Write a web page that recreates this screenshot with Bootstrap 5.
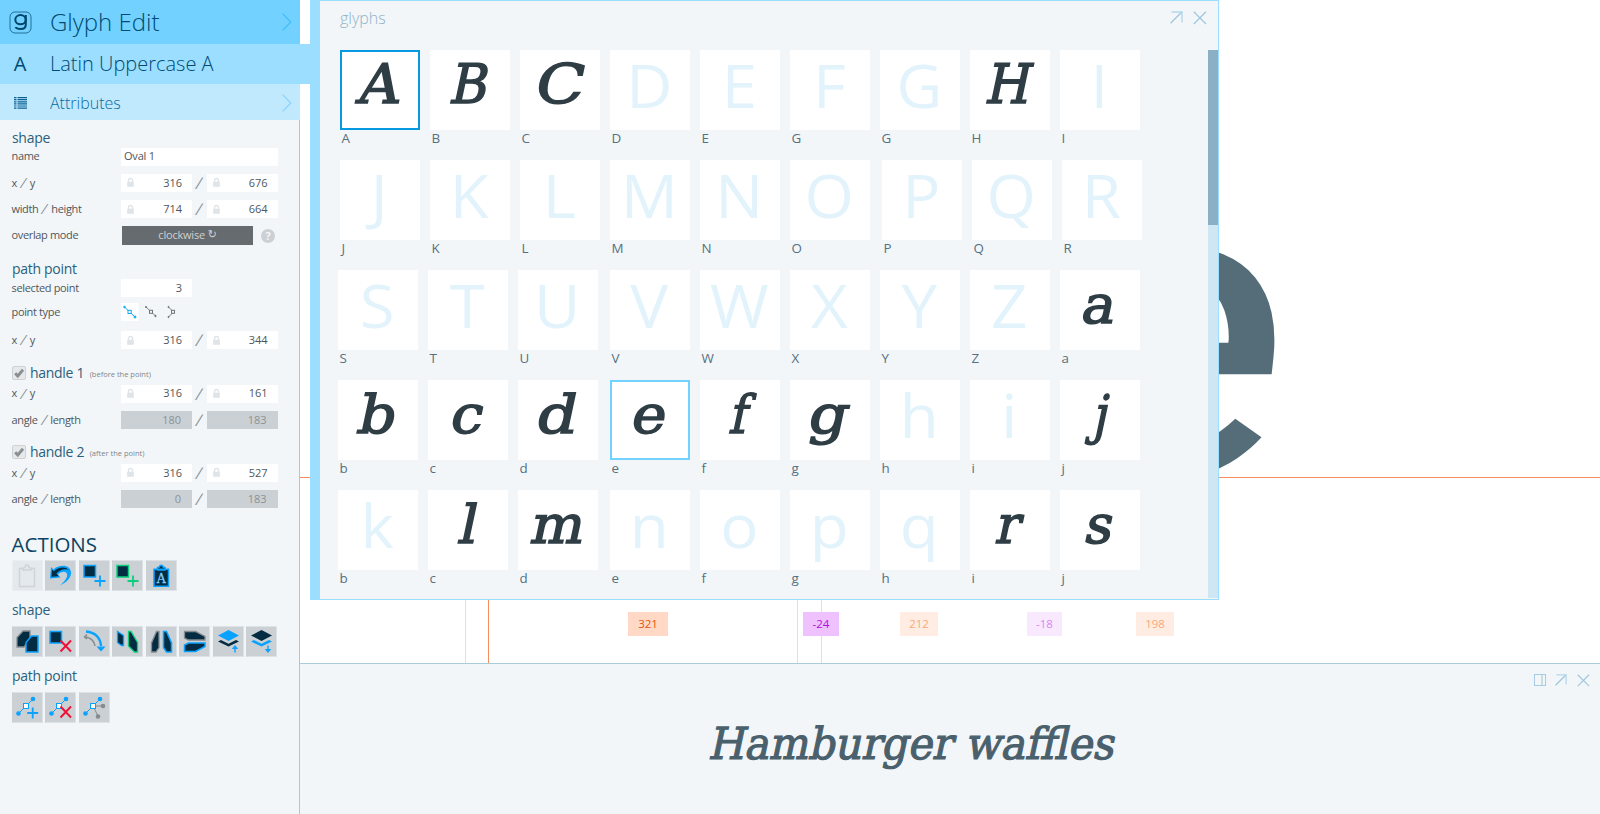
<!DOCTYPE html>
<html lang="en">
<head>
<meta charset="utf-8">
<title>Glyph Edit</title>
<link href="https://cdn.jsdelivr.net/npm/bootstrap@5.3.0/dist/css/bootstrap.min.css" rel="stylesheet">
<style>
body{font-family:"Open Sans","Noto Sans",sans-serif;width:1600px;height:814px;overflow:hidden;background:#fff}
svg{display:block;overflow:visible}
.side{width:300px;height:814px;flex:none}
.side-body{height:694px;background:#f2f6f9;border-right:1px solid #abc7d8;padding:10.5px 0 0 12px}
.crumb{font-weight:300;color:#004b73;line-height:1;white-space:nowrap;flex:none}
.crumb .ico{width:40px;flex:none}
.crumb .ttl{padding-left:10px}
.c1{height:44px;background:#72d1ff;font-size:24px}
.c2{height:40px;background:#9bdeff;font-size:20px;width:310px;position:relative;z-index:2;padding-bottom:1px}
.c3{height:36px;background:#c0e9fe;font-size:16px;color:#0a6c9e;padding-top:2px}
.grp{height:13px;line-height:13px;font-size:14px;color:#2b5f7c;letter-spacing:-.3px}
.grp small{font-size:7.5px;color:#7d868c;padding-top:4px;letter-spacing:0;margin-left:5.5px}
.prow{height:26.3px;font-size:11px;color:#4f565b}
.prow>.lab{width:109px;flex:none;letter-spacing:-.35px;margin-left:-.5px;margin-right:.5px}
.sl{color:#8b9297;font-size:14px;line-height:16px;transform:skewX(-16deg);margin:0 4px}
.gap-sl{width:14.5px;text-align:center;font-size:16px;color:#8b9297;transform:skewX(-14deg)}
.fld{width:71px;height:18px;background:#fff;padding:0 10px 0 6px;font-size:11px}
.fld.name-in{width:157px;padding-left:3px;letter-spacing:-.2px}
.fld.off{background:#cbd0d4;color:#8b9297;padding-right:11px}
.mode{width:131px;height:19px;background:#666b6f;color:#ccd1d5;font-size:11px;margin-left:1px;letter-spacing:-.2px}
.help{width:14px;height:14px;background:#cdd0d3;color:#f2f6f9;font-size:11px;line-height:14px;font-weight:700;margin-left:8px}
.chk{width:14px;height:14px;background:#e6e8ea;border:1px solid #cfd2d4;border-radius:2px;margin-right:4px}
.big-h{font-size:20.5px;line-height:20px;color:#0c4363;margin:21.5px 0 6.5px -.5px}
.acts{gap:2.5px;margin-left:-.4px}
.act{width:31px;height:31px;background:#cbd0d4;border:1px solid #dde2e6;border-left-color:#cbd0d4}
.act svg{margin:-1px}
.act.dis{background:#e4e9ed;border-color:#eaeef2}
.board{width:1300px;height:814px;position:relative}
.guide{position:absolute}
.kern{position:absolute;top:612px;height:24px;font-size:11.5px;line-height:24px;text-align:center}
.bigletter{position:absolute;font-family:Roboto,sans-serif;font-weight:400;color:#556d79;line-height:1;transform-origin:0 100%}
.win{position:absolute;left:10px;top:0;width:909px;height:600px;background:#f2f6f9;border:1px solid #9bdeff;border-left-width:10px}
.win-title{position:absolute;left:20px;top:6px;font-weight:300;font-size:16px;line-height:22px;color:#8fb4c8}
.win-tools{position:absolute;right:11px;top:10px;gap:10px}
.tiles{position:absolute;left:18px;top:49px}
.trow{height:110px;gap:10px}
.trow.first{padding-left:2px}
.tile{width:80px;height:80px;background:#fff}
.tile.sel{box-shadow:inset 0 0 0 2px #0499e0}
.tile.hov{box-shadow:inset 0 0 0 2px #72d1ff}
.nudge{margin-left:2px}
.tcap{font-size:12.5px;line-height:14px;color:#567080;padding-left:1.4px;margin-top:2px;transform:scaleX(1.07);transform-origin:0 0}
.ghost{font:60px "Open Sans",sans-serif;fill:#e2f3fc;text-anchor:middle}
.slab{font-family:"DejaVu Serif",serif}
.scroll-track{position:absolute;right:0;top:49px;width:10px;height:548px;background:#cee7f3}
.scroll-thumb{height:175px;background:#8bb0c5}
.preview{position:absolute;left:0;top:663px;width:1300px;height:151px;background:#f2f6f9;border-top:1px solid #a9cbdc}
</style>
</head>
<body class="d-flex">

<svg width="0" height="0" class="position-absolute">
  <symbol id="lock" viewBox="0 0 8 11"><path d="M1.7 5V3.2a2.3 2.3 0 0 1 4.6 0V5" fill="none" stroke="#dfe4e9" stroke-width="1.5"/><rect x=".2" y="4.6" width="7.600" height="5.800" fill="#dfe4e9"/></symbol>
  <symbol id="tick" viewBox="0 0 12 12"><path d="M2.2 6.2 4.8 9 10 2.8" fill="none" stroke="#8c8f92" stroke-width="2.9"/></symbol>
  <symbol id="chev" viewBox="0 0 10 18"><path d="M.6.7 8.800 9 .6 17.300" fill="none" stroke="currentColor" stroke-width="1.1"/></symbol>
  <symbol id="xmark" viewBox="0 0 14 14"><path d="M.8.8 13 13M13 .8.8 13" fill="none" stroke="#a0c9de" stroke-width="1.3"/></symbol>
  <symbol id="outarrow" viewBox="0 0 13 13"><path d="M.6 12.200 12 .8" fill="none" stroke="#9dc8de" stroke-width="1.3"/><path d="M1.500 1H12v10.500" fill="none" stroke="#b5d7e8" stroke-width="1.4"/></symbol>
</svg>

<aside class="side">
  <div class="crumb c1 d-flex align-items-center">
    <span class="ico d-flex justify-content-center"><svg width="23" height="23" viewBox="0 0 23 23" fill="none" stroke="#00466b"><rect x="1" y="1" width="21" height="21" rx="5" stroke-width=".7"/><ellipse cx="11.500" cy="8.700" rx="5.200" ry="4.600" stroke-width="2"/><path d="M16.800 4v9.500c0 3.200-2 4.500-5.300 4.500-2.700 0-4.300-.6-5-1.900" stroke-width="2"/></svg></span>
    <span class="ttl flex-grow-1">Glyph Edit</span>
    <svg width="10" height="18" class="me-2" color="#3bbaf8"><use href="#chev"/></svg>
  </div>
  <div class="crumb c2 d-flex align-items-center">
    <span class="ico text-center fw-normal">A</span>
    <span class="ttl">Latin Uppercase A</span>
  </div>
  <div class="crumb c3 d-flex align-items-center">
    <span class="ico d-flex justify-content-center"><svg width="13" height="12" viewBox="0 0 13 12" stroke="#0a6294"><path d="M0 .6h2.500M0 2.700h2.500M0 4.800h2.500M0 6.900h2.500M0 9h2.500M0 11.100h2.500M3.500.6H13M3.500 2.700H13M3.500 4.800H13M3.500 6.900H13M3.500 9H13M3.500 11.100H13" stroke-width="1.200"/></svg></span>
    <span class="ttl flex-grow-1">Attributes</span>
    <svg width="10" height="18" class="me-2" color="#86d2fb"><use href="#chev"/></svg>
  </div>

  <div class="side-body">
    <div class="grp">shape</div>
    <div class="prow d-flex align-items-center"><span class="lab">name</span><span class="fld name-in d-flex align-items-center">Oval 1</span></div>
    <div class="prow d-flex align-items-center" data-pair="x,y,316,676"></div>
    <div class="prow d-flex align-items-center" data-pair="width,height,714,664"></div>
    <div class="prow d-flex align-items-center"><span class="lab">overlap mode</span><span class="mode d-flex align-items-center justify-content-center">clockwise&nbsp;<span style="font-family:'DejaVu Sans'">↻</span></span><span class="help rounded-circle text-center">?</span></div>

    <div class="grp" style="margin-top:13px">path point</div>
    <div class="prow d-flex align-items-center"><span class="lab">selected point</span><span class="fld d-flex align-items-center justify-content-end">3</span></div>
    <div class="prow d-flex align-items-center" style="margin-top:-2px;margin-bottom:2px"><span class="lab">point type</span>
      <svg width="60" height="18" viewBox="0 0 60 18" fill="none">
        <rect width="17.500" height="18" fill="#fff"/>
        <g stroke="#14a5f5" fill="#14a5f5"><path d="M3.500 4 14 14"/><rect x="7" y="7.300" width="3.200" height="3.200" fill="#fff"/><circle cx="3.500" cy="4" r=".8"/><circle cx="14" cy="14" r="1"/></g>
        <g stroke="#6f7578" fill="#6f7578"><path d="M25 4 34.500 13" stroke-width=".9"/><rect x="28.500" y="7.300" width="3" height="3" fill="#f2f6f9"/><circle cx="25" cy="4" r=".6"/><circle cx="34.500" cy="13" r=".7"/></g>
        <g stroke="#6f7578" fill="#6f7578"><path d="M47.500 4 52.500 9 47.500 14" fill="none" stroke-width=".9"/><rect x="50.500" y="7.300" width="3" height="3" fill="#f2f6f9"/><circle cx="47.500" cy="4" r=".6"/><circle cx="47.500" cy="14" r=".6"/></g>
      </svg>
    </div>
    <div class="prow d-flex align-items-center" data-pair="x,y,316,344"></div>

    <div class="grp d-flex align-items-center" style="margin:12.500px 0 1.300px"><span class="chk"><svg width="12" height="12"><use href="#tick"/></svg></span>handle 1<small>(before the point)</small></div>
    <div class="prow d-flex align-items-center" data-pair="x,y,316,161"></div>
    <div class="prow d-flex align-items-center" data-pair="angle,length,180,183,off"></div>

    <div class="grp d-flex align-items-center" style="margin:12.500px 0 1.300px"><span class="chk"><svg width="12" height="12"><use href="#tick"/></svg></span>handle 2<small>(after the point)</small></div>
    <div class="prow d-flex align-items-center" data-pair="x,y,316,527"></div>
    <div class="prow d-flex align-items-center" data-pair="angle,length,0,183,off"></div>

    <div class="big-h">ACTIONS</div>
    <div class="acts d-flex">
      <span class="act dis"><svg width="31" height="31" viewBox="0 0 31 31" fill="none" stroke="#cfd4d8" stroke-width="1.500"><path d="M11 8.500H7.500v18h15v-18H19M11 10V8l2-.5c0-3.300 4-3.300 4 0l2 .5v2z"/></svg></span>
      <span class="act"><svg width="31" height="31" viewBox="0 0 31 31"><path d="M5 18.500 6 7l2.500 2.500c5-5 16.500-5.500 17.500 2.500.6 6-5 10.500-11 13.500 4.500-4 8-8 7-11.500-1-3.500-6-2.500-9 .5l2.500 3z" fill="#0aa2ff"/><path d="M6.500 16.800 7 9.500l1.900 1.700c4-4.500 13-5.500 15-.4-3-3-9-1-12.500 2.700l2.400 2.700z" fill="#032c42"/></svg></span>
      <span class="act"><svg width="31" height="31" viewBox="0 0 31 31"><rect x="5" y="5.500" width="11.500" height="11.500" fill="#032c42" stroke="#0aa2ff" stroke-width="1.500"/><path d="M21 15.500v11M15.500 21h11" stroke="#0aa2ff" stroke-width="1.800"/></svg></span>
      <span class="act"><svg width="31" height="31" viewBox="0 0 31 31"><rect x="5" y="5.500" width="11.500" height="11.500" fill="#032c42" stroke="#09cf7c" stroke-width="1.500"/><path d="M21 15.500v11M15.500 21h11" stroke="#09cf7c" stroke-width="1.800"/></svg></span>
      <span class="act"><svg width="31" height="31" viewBox="0 0 31 31"><path d="M8 9.300h14.500v17H8zM11.500 10V7.500l2-.5c0-2.500 3.500-2.500 3.500 0l2 .5V10z" fill="#032c42" stroke="#0aa2ff" stroke-width="1.500"/><text x="15.300" y="23" font-family="DejaVu Serif" font-size="12.500" text-anchor="middle" fill="#7ccfff" stroke="#7ccfff" stroke-width=".3">A</text></svg></span>
    </div>

    <div class="grp" style="margin:12px 0 10px">shape</div>
    <div class="acts d-flex">
      <span class="act"><svg width="31" height="31" viewBox="0 0 31 31"><path d="M5 21V11.500L11 5h7v8l-6 8z" fill="#032c42" stroke="#858b8f" stroke-width="1.300"/><path d="M14 26V16.500L19.500 10H26v16z" fill="#032c42" stroke="#0aa2ff" stroke-width="1.500"/></svg></span>
      <span class="act"><svg width="31" height="31" viewBox="0 0 31 31"><rect x="5" y="5.500" width="11.500" height="11.500" fill="#032c42" stroke="#0aa2ff" stroke-width="1.500"/><path d="m15.500 14.500 10.500 11M26 14.500l-10.500 11" stroke="#ee1037" stroke-width="1.900"/></svg></span>
      <span class="act"><svg width="31" height="31" viewBox="0 0 31 31" fill="none"><path d="M7 5.500C16 6 21.500 12 22 20" stroke="#0aa2ff" stroke-width="2.300"/><path d="M17.500 20.500h9L22 25.500z" fill="#0aa2ff"/><path d="M6 11c5 0 9.500 4 10 9M8 8.500 5.500 11 8 13" stroke="#858b8f" stroke-width="1.500"/></svg></span>
      <span class="act"><svg width="31" height="31" viewBox="0 0 31 31"><path d="M5.500 5.500v11l4 3h2v-10z" fill="#032c42" stroke="#0aa2ff" stroke-width="1.300"/><path d="M16.500 5.500H19l6.500 11V26h-3l-6-6z" fill="#032c42" stroke="#09cf7c" stroke-width="1.300"/></svg></span>
      <span class="act"><svg width="31" height="31" viewBox="0 0 31 31"><path d="M13 5.500v16L10 26H5.500v-9l5-11.500z" fill="#032c42" stroke="#858b8f" stroke-width="1.300"/><path d="M17.500 5.500v16l3 4.500H25.500v-9l-5-11.500z" fill="#032c42" stroke="#0aa2ff" stroke-width="1.500"/></svg></span>
      <span class="act"><svg width="31" height="31" viewBox="0 0 31 31"><path d="M5.500 5.500h11l9.500 5V14H9.500l-4-2z" fill="#032c42" stroke="#858b8f" stroke-width="1.300"/><path d="M5.500 25.500h11l9.500-5V17H9.500l-4 2z" fill="#032c42" stroke="#0aa2ff" stroke-width="1.500"/></svg></span>
      <span class="act"><svg width="31" height="31" viewBox="0 0 31 31"><path d="M15.500 4 26 9.500 15.500 15 5 9.500z" fill="#0aa2ff"/><path d="m5 15.500 3-1.500 7.500 3.700L23 14l3 1.500-10.500 5z" fill="#032c42"/><path d="M22 26.500v-5M20.300 22.200 22 20.200l1.700 2z" stroke="#0aa2ff" stroke-width="1.400" fill="#0aa2ff"/></svg></span>
      <span class="act"><svg width="31" height="31" viewBox="0 0 31 31"><path d="M15.500 4 26 9.500 15.500 15 5 9.500z" fill="#032c42"/><path d="m5 15.500 3-1.500 7.500 3.700L23 14l3 1.500-10.500 5z" fill="#0aa2ff"/><path d="M22 19.500v5M20.300 23.800 22 25.800l1.700-2z" stroke="#0aa2ff" stroke-width="1.400" fill="#0aa2ff"/></svg></span>
    </div>

    <div class="grp" style="margin:12px 0 9.500px">path point</div>
    <div class="acts d-flex">
      <span class="act"><svg width="31" height="31" viewBox="0 0 31 31"><path d="M6.500 21.500 21 7" stroke="#0aa2ff"/><circle cx="6.500" cy="21.500" r="2.300" fill="#0aa2ff"/><circle cx="21" cy="7" r="2.300" fill="#0aa2ff"/><rect x="11.500" y="11.500" width="5" height="5" fill="#fff" stroke="#0aa2ff"/><path d="M20.700 15.500v11M15.200 21h11" stroke="#0aa2ff" stroke-width="1.800"/></svg></span>
      <span class="act"><svg width="31" height="31" viewBox="0 0 31 31"><path d="M6.500 21.500 21 7" stroke="#0aa2ff"/><circle cx="6.500" cy="21.500" r="2.300" fill="#0aa2ff"/><circle cx="21" cy="7" r="2.300" fill="#0aa2ff"/><rect x="11.500" y="11.500" width="5" height="5" fill="#fff" stroke="#0aa2ff"/><path d="m15.500 14.500 10.500 11M26 14.500l-10.500 11" stroke="#ee1037" stroke-width="1.900"/></svg></span>
      <span class="act"><svg width="31" height="31" viewBox="0 0 31 31"><path d="M14 14h10M14 14l5 10" stroke="#858b8f"/><circle cx="24" cy="14" r="2.300" fill="#858b8f"/><circle cx="19" cy="24.500" r="2.300" fill="#858b8f"/><path d="M6.500 21.500 21 7" stroke="#0aa2ff"/><circle cx="6.500" cy="21.500" r="2.300" fill="#0aa2ff"/><circle cx="21" cy="7" r="2.300" fill="#0aa2ff"/><rect x="11.500" y="11.500" width="5" height="5" fill="#fff" stroke="#0aa2ff"/></svg></span>
    </div>
  </div>
</aside>

<main class="board">
  <span class="bigletter" style="left:699px;top:115px;font-size:430px;transform:skewX(-6deg) scaleX(1.2)">e</span>
  <i class="guide" style="left:0;top:477px;width:1300px;height:1px;background:#f98c5c"></i>
  <i class="guide" style="left:165px;top:600px;width:1px;height:63px;background:#fcd6c6"></i>
  <i class="guide" style="left:188px;top:600px;width:1px;height:63px;background:#f98c5c"></i>
  <i class="guide" style="left:497px;top:600px;width:1px;height:63px;background:#fcd6c6"></i>
  <i class="guide" style="left:521px;top:600px;width:1px;height:63px;background:#fcd6c6"></i>
  <span class="kern" style="left:328px;width:40px;background:#ffd9c6;color:#e2560f">321</span>
  <span class="kern" style="left:503px;width:36px;background:#efc2ff;color:#b010e0">-24</span>
  <span class="kern" style="left:600px;width:38px;background:#ffece3;color:#fba878">212</span>
  <span class="kern" style="left:727px;width:35px;background:#f9e9ff;color:#dd84f5">-18</span>
  <span class="kern" style="left:836px;width:38px;background:#ffece3;color:#fba878">198</span>

  <section class="preview">
    <div class="d-flex justify-content-end" style="gap:9px;padding:10px 10px 0 0">
      <svg width="12" height="12" viewBox="0 0 12 12"><path d="M8 1v10" stroke="#c3dfed" stroke-width="2"/><rect x=".5" y=".5" width="11" height="11" fill="none" stroke="#a5cce0"/></svg>
      <svg width="12" height="12"><use href="#outarrow"/></svg>
      <svg width="13" height="13" style="margin-left:1px"><use href="#xmark"/></svg>
    </div>
    <svg id="sample" width="1300" height="90" fill="#4a606c" stroke="#4a606c"></svg>
  </section>

  <section class="win">
    <div class="win-title">glyphs</div>
    <div class="win-tools d-flex"><svg width="13" height="13"><use href="#outarrow"/></svg><svg width="14" height="14"><use href="#xmark"/></svg></div>
    <div class="tiles" id="tiles"></div>
    <div class="scroll-track"><div class="scroll-thumb"></div></div>
  </section>
</main>

<script src="https://cdn.jsdelivr.net/npm/bootstrap@5.3.0/dist/js/bootstrap.bundle.min.js"></script>
<script>
// coordinate pairs: first label, second label, two values, optional read-only flag
document.querySelectorAll('[data-pair]').forEach(el => {
  const [a, b, v1, v2, off] = el.dataset.pair.split(',');
  const fld = v => off
    ? `<span class="fld off d-flex align-items-center justify-content-end">${v}</span>`
    : `<span class="fld d-flex align-items-center justify-content-between"><svg width="7" height="11"><use href="#lock"/></svg>${v}</span>`;
  el.innerHTML = `<span class="lab d-flex align-items-center">${a}<span class="sl">/</span>${b}</span>${fld(v1)}<span class="gap-sl">/</span>${fld(v2)}`;
});

// horizontal ink extent of slanted slab text
const SLANT = Math.tan(12 * Math.PI / 180);
function ink(text, size) {
  const c = document.createElement('canvas');
  c.width = 1400; c.height = 200;
  const g = c.getContext('2d', {willReadFrequently: true});
  g.setTransform(1, 0, -SLANT, 1, 100, 100);
  g.font = size + 'px "DejaVu Serif"';
  g.fillText(text, 0, 0);
  const d = g.getImageData(0, 0, 1400, 200).data;
  let l = 1400, r = 0;
  for (let y = 0; y < 200; y++) for (let x = 0; x < 1400; x++)
    if (d[(y * 1400 + x) * 4 + 3] > 100) { if (x < l) l = x; if (x > r) r = x; }
  return [l - 100, r + 1 - 100];
}
function slab(text, size, x1, x2, base, sw) {
  const [l, r] = ink(text, size), w = sw / 2;
  const k = (x2 - x1 - sw) / (r - l);
  return `<text class="slab" font-size="${size}" stroke-width="${sw}" transform="matrix(${k} 0 ${-SLANT} 1 ${x1 + w - l * k} ${base})">${text}</text>`;
}

const rows = [
  ['A:15:59', 'B:20:57', 'C:20:66', 'D', 'E', 'F', 'G', 'H:16:64', 'I'],
  ['J', 'K', 'L', 'M', 'N', 'O', 'P', 'Q', 'R'],
  ['S', 'T', 'U', 'V', 'W', 'X', 'Y', 'Z', 'a:23:53'],
  ['b:19:57', 'c:25:56', 'd:21:59', 'e:24:55', 'f:29:56', 'g:19:61', 'h', 'i', 'j:25:49'],
  ['k', 'l:30:49', 'm:12:63', 'n', 'o', 'p', 'q', 'r:25:54', 's:25:53']
];
const caps = ['ABCDEGGHI', 'JKLMNOPQR', 'STUVWXYZa', 'bcdefghij', 'bcdefghij'];
document.getElementById('tiles').innerHTML = rows.map((row, i) =>
  `<div class="trow d-flex ${i < 2 ? 'first' : ''}">` + row.map((cell, j) => {
    const [ch, a, b] = cell.split(':');
    const art = a ? `<g fill="#2f3d45" stroke="#2f3d45">${slab(ch, i < 2 ? 54.5 : 53, +a, +b, 52.5, 1.6)}</g>`
                  : `<text class="ghost" transform="matrix(1.06 0 0 1 39.300 57.600)">${ch}</text>`;
    const nudge = (i == 1 && j == 6) || (i > 1 && j == 3) ? 'nudge' : '';
    const state = ch == 'A' ? 'sel' : ch == 'e' ? 'hov' : '';
    return `<div class="${nudge}"><div class="tile ${state}"><svg width="80" height="80">${art}</svg></div><div class="tcap">${caps[i][j]}</div></div>`;
  }).join('') + '</div>').join('');

document.getElementById('sample').innerHTML = slab('Hamburger waffles', 44, 409, 815, 71.5, 1.2);
</script>
</body>
</html>
